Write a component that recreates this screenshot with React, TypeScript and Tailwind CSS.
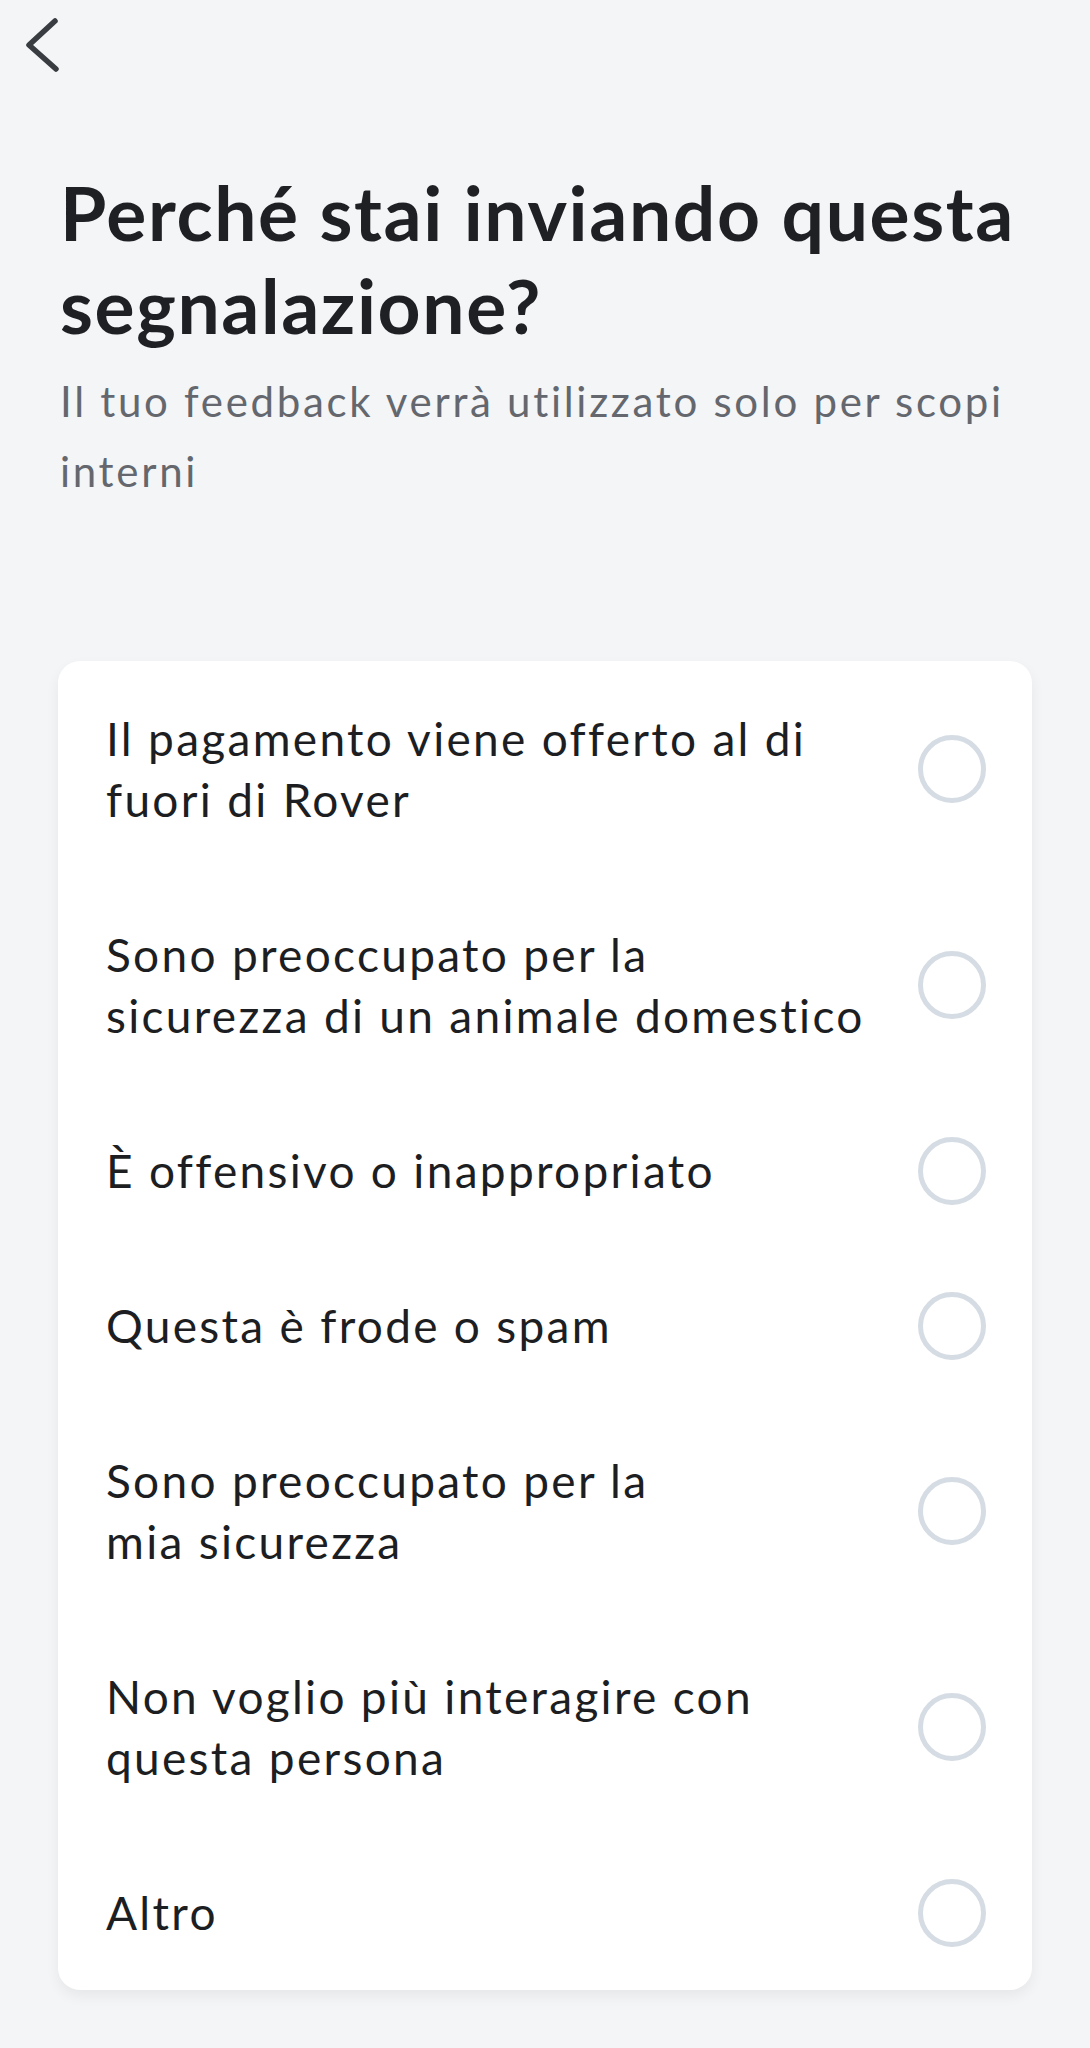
import React from "react";

const options: string[][] = [
  ["Il pagamento viene offerto al di", "fuori di Rover"],
  ["Sono preoccupato per la", "sicurezza di un animale domestico"],
  ["È offensivo o inappropriato"],
  ["Questa è frode o spam"],
  ["Sono preoccupato per la", "mia sicurezza"],
  ["Non voglio più interagire con", "questa persona"],
  ["Altro"],
];

export default function App() {
  return (
    <div className="min-h-[2048px] w-full bg-[#f4f5f7] font-['Lato','Noto_Sans',sans-serif]">
      <div className="pl-[24px] pt-[14px]">
        <svg width="40" height="62" viewBox="0 0 40 62" fill="none">
          <polyline
            points="31,7 5,31 32,55"
            stroke="#393c41"
            strokeWidth="5.5"
            strokeLinecap="round"
            strokeLinejoin="round"
          />
        </svg>
      </div>
      <div className="px-[60px] pt-[90px]">
        <h1 className="text-[75px] leading-[93px] font-bold tracking-[1.6px] text-[#1e2024]">
          Perché stai inviando questa
          <br />
          segnalazione?
        </h1>
        <p className="mt-[14px] text-[42px] leading-[70px] tracking-[2.7px] text-[#64686e]">
          Il tuo feedback verrà utilizzato solo per scopi
          <br />
          interni
        </p>
      </div>
      <div className="mx-[58px] mt-[155px] rounded-[22px] bg-white shadow-[0_6px_14px_rgba(0,0,0,0.06)]">
        {options.map((lines, i) => (
          <div
            key={i}
            className="flex items-center justify-between pl-[48px] pr-[46px] py-[47px]"
          >
            <div className="text-[46px] leading-[61px] tracking-[2.3px] text-[#1c1e22]">
              {lines.map((l, j) => (
                <div key={j} className="whitespace-nowrap">
                  {l}
                </div>
              ))}
            </div>
            <div className="-my-[4px] h-[68px] w-[68px] shrink-0 rounded-full border-[5px] border-[#d5dce3]" />
          </div>
        ))}
      </div>
    </div>
  );
}
